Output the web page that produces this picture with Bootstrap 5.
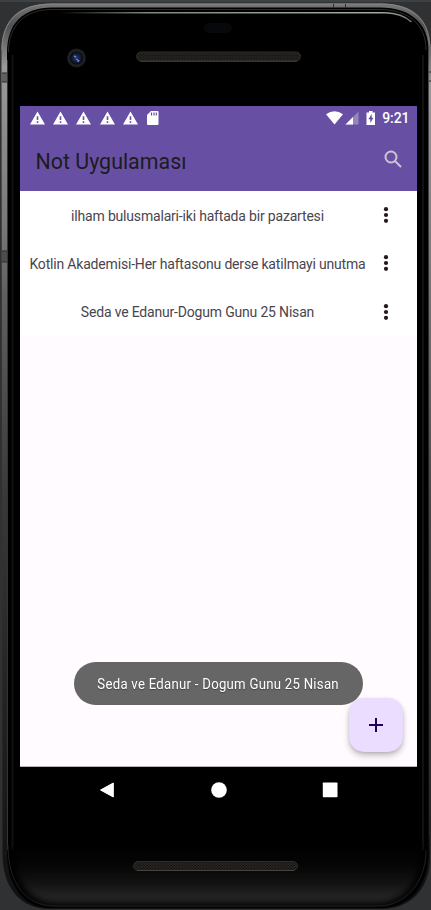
<!DOCTYPE html>
<html lang="tr">
<head>
<meta charset="utf-8">
<meta name="viewport" content="width=device-width, initial-scale=1">
<title>Not Uygulaması</title>
<link href="https://cdn.jsdelivr.net/npm/bootstrap@5.3.0/dist/css/bootstrap.min.css" rel="stylesheet">
<style>
body{font-family:Roboto,"Liberation Sans",sans-serif;background:#303133;width:431px;height:910px}
.phone{width:431px;height:910px}
.hardware{left:0;top:0;z-index:0}
.display-area{width:397px;height:661px;margin:106px 0 0 20px;background:#fffbff;z-index:1;border-bottom:1px solid #b8b4b8}
.status-bar{height:24px;background:#6750a3;padding:0 7.5px 0 10px}
.alerts{gap:7.2px}
.clock{font-size:14px;font-weight:500;line-height:24px;letter-spacing:-.05px;margin-left:5px}
.app-bar{height:61px;background:#6750a3;padding:0 14px 0 15.5px}
.app-title{font-size:21.4px;line-height:28px;color:#1c1b1f;margin-top:2px}
.find{margin-top:-3px}
.note{height:48.3px;font-size:14px;letter-spacing:-.185px;color:#49454f;padding-left:5px;background:#fff}
.note span{width:345px;padding-top:2px}
.note svg{margin-left:10px}
.snack{left:54px;top:556px;width:289px;height:43px;border-radius:21.5px;background:#666;color:#fff;z-index:3}
.snack span{display:block;font-size:15.2px;line-height:20px;transform:scaleX(.868);text-shadow:0 1px 1px #444;letter-spacing:.3px}
.add{left:329px;top:592px;width:54px;height:54px;border-radius:15px;background:#eaddff;box-shadow:0 4px 6px rgba(0,0,0,.22),0 1px 3px rgba(0,0,0,.12);z-index:2}
.nav-keys{width:397px;height:46px;margin-left:20px;padding:0 79px;z-index:1}
</style>
<script src="https://cdn.jsdelivr.net/npm/bootstrap@5.3.0/dist/js/bootstrap.bundle.min.js"></script>
</head>
<body class="overflow-hidden m-0">
<div class="phone position-relative overflow-hidden">
<svg class="hardware position-absolute" width="431" height="910" viewBox="0 0 431 910" aria-hidden="true">
  <defs>
    <linearGradient id="metal" x2="0" y2="1"><stop offset="0" stop-color="#777"/><stop offset=".025" stop-color="#505050"/><stop offset=".07" stop-color="#999"/><stop offset=".25" stop-color="#777"/><stop offset=".32" stop-color="#606060"/><stop offset=".55" stop-color="#383838"/><stop offset=".8" stop-color="#202020"/><stop offset="1" stop-color="#101010"/></linearGradient>
    <linearGradient id="chin" x2="0" y2="1"><stop stop-color="#000"/><stop offset=".35" stop-color="#050505"/><stop offset=".65" stop-color="#121212"/><stop offset=".9" stop-color="#242424"/><stop offset="1" stop-color="#2a2a2a"/></linearGradient>
    <linearGradient id="gloss"><stop stop-color="#8b9894" stop-opacity="0"/><stop offset=".25" stop-color="#7d8985"/><stop offset=".9" stop-color="#a1aaa7"/><stop offset="1" stop-color="#777"/></linearGradient>
    <linearGradient id="side" gradientUnits="userSpaceOnUse" x1="0" y1="40" x2="0" y2="836"><stop stop-color="#606060"/><stop offset=".06" stop-color="#999"/><stop offset=".3" stop-color="#777"/><stop offset=".6" stop-color="#454545"/><stop offset="1" stop-color="#252525"/></linearGradient>
    <radialGradient id="lens"><stop stop-color="#203675"/><stop offset=".5" stop-color="#10182c"/><stop offset=".65" stop-color="#080b12"/><stop offset=".75" stop-color="#242426"/><stop offset="1" stop-color="#171719"/></radialGradient>
    <pattern id="mesh" width="3" height="3" patternUnits="userSpaceOnUse"><rect width="3" height="3" fill="#11100f"/><path d="M0 0l1.500 1.500L0 3M1.500 0L3 1.500 1.500 3" fill="none" stroke="#3b3733" stroke-width=".6"/></pattern>
    <filter id="soft" color-interpolation-filters="sRGB"><feGaussianBlur stdDeviation="3"/></filter>
  </defs>
  <rect width="431" height="910" fill="#303133"/>
  <rect width="431" height="2" fill="#3e4144"/>
  <path d="M1.500 50C1.500 20 18 3.500 52 3.500H381C414 3.500 430 20 430 46V858C430 890 409 909 382 909H50C20 909 2.500 887 2.500 854Z" fill="url(#metal)"/>
  <path d="M2 50C2 21 19 4 52 4H381C412 4 429.500 20 429.500 46" fill="none" stroke="#858585"/>
  <path d="M7 52C7 24 23 7.500 52 7.500H380C411 7.500 428.500 24 428.500 50V854C428.500 887 408 908 381 908H51C23 908 7 885 7 851Z" fill="#000"/>
  <path d="M8.500 52C8.500 26 24 9.500 52 9.500H380C409 9.500 426 25 426 50" fill="none" stroke="#2b2b2b"/>
  <path d="M12.500 55V850M423 55V850" stroke="#111" stroke-width="2"/>
  <path d="M7.500 60V850" stroke="#343434"/>
  <path d="M15 845H421V855C419 886 402 903 375 903H58C31 903 15 885 15 855Z" fill="url(#chin)" filter="url(#soft)"/>
  <path d="M8 845C8 884 26 906 55 906H378C405 906 426 883 426 850" fill="none" stroke="#202020"/>
  <path d="M60 12.700H385Q402 13 411.500 22" fill="none" stroke="url(#gloss)" stroke-width="1.500"/>
  <rect x="2" y="73" width="5" height="9" fill="#606060"/>
  <rect x="2" y="251" width="5" height="11" fill="#4c4c4c"/>
  <path d="M2 73h5M2 82h5M2 251h5M2 262h5M333.500 4v4M345.500 4v4" stroke="#2d2d2d"/>
  <path d="M430 44V836" stroke="url(#side)" stroke-width="2"/>
  <path d="M429 72h2M429 81h2M429 836h2M429 845h2" stroke="#222"/>
  <rect x="204" y="23" width="28" height="10" rx="5" fill="#07080c"/>
  <circle cx="76.500" cy="58" r="9.500" fill="url(#lens)"/>
  <path d="M74 56l2 1M76 59l3 2M78 62l1-2" stroke="#7184c4" stroke-width="1.500"/>
  <rect x="136.500" y="52" width="164" height="9" rx="4.500" fill="url(#mesh)" stroke="#302d29"/>
  <rect x="133.500" y="861.500" width="164" height="9" rx="4.500" fill="url(#mesh)" stroke="#302d29"/>
  <path d="M140 61.300H297M137 870.500H294" stroke="#4b4842" stroke-width=".8"/>
</svg>

<div class="d-flex flex-column">
<main class="display-area position-relative">
  <div class="status-bar d-flex align-items-center justify-content-between text-white">
    <div class="alerts d-flex align-items-center">
      <svg width="16" height="14" viewBox="0 0 16 14"><path id="warn" fill="#fff" fill-rule="evenodd" d="M7.500.500 15 13.500H0ZM6.700 5.200V9h1.600V5.200ZM6.700 10.300v1.600h1.600v-1.600Z"/></svg>
      <svg width="16" height="14" viewBox="0 0 16 14"><use href="#warn"/></svg>
      <svg width="16" height="14" viewBox="0 0 16 14"><use href="#warn"/></svg>
      <svg width="16" height="14" viewBox="0 0 16 14"><use href="#warn"/></svg>
      <svg width="16" height="14" viewBox="0 0 16 14"><use href="#warn"/></svg>
      <svg width="14" height="14" viewBox="0 0 14 14"><path fill="#fff" d="M5 0h6.500q1 0 1 1v12q0 1-1 1H2q-1 0-1-1V4Z"/><path d="M5.500 1.500v3M8 1.500v3M10.300 1.500v3" stroke="#6750a3" stroke-width="1.200"/></svg>
    </div>
    <div class="d-flex align-items-center">
      <svg width="34" height="14" viewBox="0 0 34 14"><path fill="#fff" d="M0 3.300Q8.500-3 17 3.300L8.500 13.500Z"/><path fill="#9485bf" d="M32.500.500v13H19.500Z"/><path fill="#fff" d="M27 6v7.500h-7.500Z"/></svg>
      <svg class="ms-1" width="13" height="16" viewBox="0 0 13 16"><path fill="#fff" d="M5 1h3.500v1.500h2.500V15H2.500V2.500H5Z"/><path fill="#6750a3" d="M7.700 4 4.300 9.200h2V13L9.500 7.800H7.700Z"/></svg>
      <span class="clock">9:21</span>
    </div>
  </div>
  <header class="app-bar d-flex align-items-center justify-content-between">
    <h1 class="app-title fw-normal mb-0">Not Uygulaması</h1>
    <svg class="find" width="20" height="20" viewBox="0 0 20 20" fill="none" stroke="#cec5cd" stroke-width="2"><circle cx="8" cy="8" r="5.500"/><path d="m12 12 6 6"/></svg>
  </header>
  <div>
    <div class="note d-flex align-items-center"><span class="text-center text-nowrap">ilham bulusmalari-iki haftada bir pazartesi</span><svg width="12" height="18" viewBox="0 0 12 18" fill="#25171c"><circle cx="6" cy="3.200" r="2.100"/><circle cx="6" cy="9" r="2.100"/><circle cx="6" cy="14.800" r="2.100"/></svg></div>
    <div class="note d-flex align-items-center"><span class="text-center text-nowrap">Kotlin Akademisi-Her haftasonu derse katilmayi unutma</span><svg width="12" height="18" viewBox="0 0 12 18" fill="#25171c"><circle cx="6" cy="3.200" r="2.100"/><circle cx="6" cy="9" r="2.100"/><circle cx="6" cy="14.800" r="2.100"/></svg></div>
    <div class="note d-flex align-items-center"><span class="text-center text-nowrap">Seda ve Edanur-Dogum Gunu 25 Nisan</span><svg width="12" height="18" viewBox="0 0 12 18" fill="#25171c"><circle cx="6" cy="3.200" r="2.100"/><circle cx="6" cy="9" r="2.100"/><circle cx="6" cy="14.800" r="2.100"/></svg></div>
  </div>
  <div class="snack position-absolute d-flex align-items-center justify-content-center text-nowrap" role="status"><span>Seda ve Edanur - Dogum Gunu 25 Nisan</span></div>
  <button class="add btn border-0 p-0 position-absolute d-flex align-items-center justify-content-center" aria-label="Ekle"><svg width="14" height="14" viewBox="0 0 14 14"><path d="M7 0v14M0 7h14" stroke="#21005d" stroke-width="2"/></svg></button>
</main>
<nav class="nav-keys position-relative d-flex align-items-center justify-content-between">
  <svg width="16" height="16" viewBox="0 0 16 16"><path d="M14.300 1v14L1.500 8Z" fill="#fff" stroke="#fff" stroke-linejoin="round"/></svg>
  <svg width="16" height="16" viewBox="0 0 16 16"><circle cx="8" cy="8" r="7.800" fill="#fff"/></svg>
  <svg width="16" height="16" viewBox="0 0 16 16"><rect x=".8" y=".5" width="14.700" height="14.700" rx=".8" fill="#fff"/></svg>
</nav>
</div>
</div>
</body>
</html>
